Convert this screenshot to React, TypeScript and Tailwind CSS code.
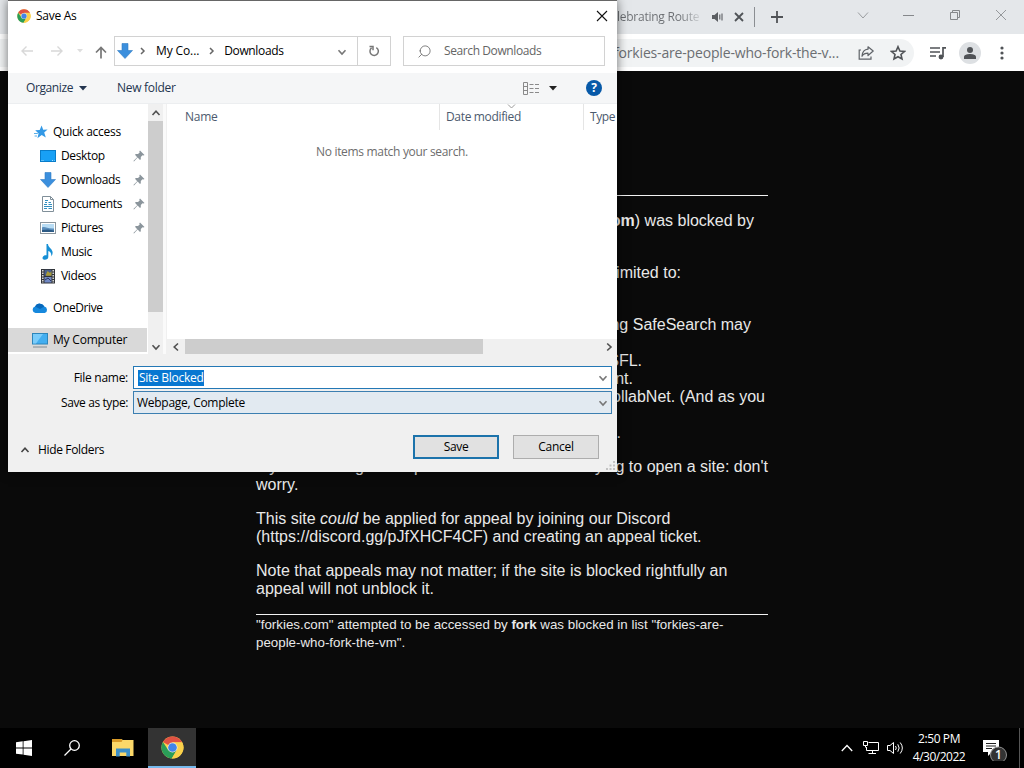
import React from "react";
import { Search } from "lucide-react";

const UI = "font-['Open_Sans','Noto_Sans',sans-serif]";

function ChromeLogo({ className }: { className: string }) {
  return (
    <svg viewBox="0 0 48 48" className={className}>
      <circle cx="24" cy="24" r="23" fill="#fbd14b" />
      <path d="M24 24 L4 12.5 A23 23 0 0 1 44 12.5 L44 13.5 H24 Z" fill="#e05243" />
      <path d="M4 12.5 A23 23 0 0 0 22.5 47 L33 29 L24 24 L15 29 Z" fill="#2a9d58" />
      <path d="M44 13 H24 V24 L33 29 L22.5 47 A23 23 0 0 0 44 13 Z" fill="#fbd14b" />
      <circle cx="24" cy="24" r="10.5" fill="#f2ead8" />
      <circle cx="24" cy="24" r="9" fill="#4285e8" />
    </svg>
  );
}

function Chevron({ dir, className = "" }: { dir: "up" | "down" | "left" | "right"; className?: string }) {
  const d = {
    up: "M1.5 7 L5 3.2 L8.5 7",
    down: "M1.5 3.2 L5 7 L8.5 3.2",
    left: "M7 1.5 L3.2 5 L7 8.5",
    right: "M3.2 1.5 L7 5 L3.2 8.5",
  }[dir];
  return (
    <svg viewBox="0 0 10 10" className={`size-2.5 shrink-0 ${className}`} fill="none" stroke="currentColor" strokeWidth="1.6">
      <path d={d} />
    </svg>
  );
}

function DownArrow() {
  return (
    <svg viewBox="0 0 16 16" className="size-4 shrink-0">
      <path d="M5 0.5 H11 V7.5 H15.5 L8 15.5 L0.5 7.5 H5 Z" fill="#3b8fdd" stroke="#2f7cc4" strokeWidth=".6" />
    </svg>
  );
}

function Pin() {
  return (
    <svg viewBox="0 0 12 12" className="size-3 shrink-0" fill="#8b959c">
      <path d="M7 .5 L11.5 5 L10.5 5.6 L9.5 5.3 L7.8 7 L7.8 9.3 L7 10 L4.6 7.6 L1 11.5 L.4 11 L4.2 7.2 L2 4.8 L2.8 4 L5 4.1 L6.7 2.4 L6.3 1.4 Z" />
    </svg>
  );
}

const icons: Record<string, React.ReactNode> = {
  star: (
    <svg viewBox="0 0 14 14" className="size-3.5 shrink-0">
      <path d="M7.6 .6 L9.2 4.8 L13.6 4.5 L10.2 7.6 L11.8 12.6 L7.7 10.1 L3.4 13.2 L4.6 8.4 L1.2 5.2 L5.7 4.9 Z" fill="#3399e6" />
      <path d="M0 8.5 H3.8 M.6 11 H3" stroke="#58aee9" />
    </svg>
  ),
  desktop: (
    <svg viewBox="0 0 16 12" className="h-3 w-4 shrink-0">
      <rect x=".5" y=".5" width="15" height="11" fill="#18a0f5" stroke="#087cc9" />
      <path d="M1.5 10.5 H4 M12 10.5 H14.5" stroke="#a9dcfb" strokeDasharray="1 1" />
    </svg>
  ),
  downloads: <DownArrow />,
  documents: (
    <svg viewBox="0 0 16 16" className="size-4 shrink-0">
      <path d="M2.5 .5 H10.5 L13.5 3.5 V15.5 H2.5 Z" fill="#fff" stroke="#808f99" />
      <path d="M10.5 .5 V3.5 H13.5" fill="none" stroke="#808f99" />
      <path d="M5 4.5 H8 M5 6.5 H7 M8.5 6.5 H11 M4 8.5 H7 M8.5 8.5 H12 M4 10.5 H12 M4 12.5 H7 M8.5 12.5 H12" stroke="#328fc0" />
    </svg>
  ),
  pictures: (
    <svg viewBox="0 0 16 12" className="h-3 w-4 shrink-0">
      <rect x=".5" y=".5" width="15" height="11" fill="#fff" stroke="#8b969e" />
      <rect x="2" y="2" width="12" height="8" fill="#b8dcf4" />
      <path d="M2 5.5 C5 4 7 7 14 6.5 V10 H2 Z" fill="#5b8fbd" />
      <path d="M2 8 L8 7.5 L14 8.5 V10 H2 Z" fill="#2c5a85" />
    </svg>
  ),
  music: (
    <svg viewBox="0 0 16 16" className="size-4 shrink-0">
      <path d="M6.5 0 H8 C8 3.5 13 5 12.6 9 C12.5 10.5 12 11.5 11.2 12.5 C11.7 9.5 10.5 7.5 8.3 7 V13 C8.3 14.8 6.4 16 4.4 15.8 C2.8 15.6 2.1 14.4 2.8 13 C3.5 11.5 5 11 6.5 11.3 Z" fill="#168fd5" />
    </svg>
  ),
  videos: (
    <svg viewBox="0 0 16 16" className="size-4 shrink-0">
      <rect x="1" y="1" width="14" height="14.5" fill="#303337" />
      <path d="M2.8 2 V15 M13.2 2 V15" stroke="#e9e9e9" strokeWidth="1.4" strokeDasharray="1.4 1.1" />
      <rect x="4.5" y="1.8" width="7" height="6" fill="#49608e" />
      <path d="M6 6.5 L7.5 3 L10 5 L11.5 3 V7.8 H6 Z" fill="#a99b38" />
      <rect x="4.5" y="9" width="7" height="5.5" fill="#7088c4" />
      <path d="M5 12 L8 10 L11 13" stroke="#2c3964" fill="none" />
    </svg>
  ),
  onedrive: (
    <svg viewBox="0 0 16 10" className="h-2.5 w-4 shrink-0">
      <path d="M3.5 10 A3.4 3.4 0 0 1 3 3.4 A5.2 5.2 0 0 1 12.3 3.6 A3.3 3.3 0 0 1 12.7 10 Z" fill="#1688dd" />
      <path d="M3 3.4 A5.2 5.2 0 0 1 12.3 3.6 L8 6 Z" fill="#0868bb" />
    </svg>
  ),
  computer: (
    <svg viewBox="0 0 16 15" className="h-[15px] w-4 shrink-0">
      <rect x=".5" y=".5" width="15" height="10.5" fill="#42aef0" stroke="#2d85ba" />
      <path d="M1 1 H11 L4 10.5 H1 Z" fill="#7accfa" />
      <path d="M1 14 H15" stroke="#7f8c95" />
    </svg>
  ),
};

const quickItems = [
  { icon: "desktop", label: "Desktop", pinned: true },
  { icon: "downloads", label: "Downloads", pinned: true },
  { icon: "documents", label: "Documents", pinned: true },
  { icon: "pictures", label: "Pictures", pinned: true },
  { icon: "music", label: "Music", pinned: false },
  { icon: "videos", label: "Videos", pinned: false },
];

function Sidebar() {
  return (
    <div className="flex w-[159px] shrink-0">
      <div className="flex w-[139px] flex-col pt-4 text-black">
        <div className="flex h-6 items-center gap-[5px] pl-[26px]">
          {icons.star}
          <span className="tracking-[-0.28px]">Quick access</span>
        </div>
        {quickItems.map((item) => (
          <div key={item.label} className="flex h-6 items-center gap-[5px] pr-0.5 pl-8">
            {icons[item.icon]}
            <span className="flex-1 tracking-[-0.36px]">{item.label}</span>
            {item.pinned && <Pin />}
          </div>
        ))}
        <div className="mt-2 flex h-6 items-center gap-[5px] pl-6">
          {icons.onedrive}
          <span className="tracking-[-0.4px]">OneDrive</span>
        </div>
        <div className="mt-2 flex h-6 items-center gap-[5px] bg-[#d9d9d9] pl-6">
          {icons.computer}
          <span className="tracking-[-0.2px]">My Computer</span>
        </div>
      </div>
      <div className="ml-px flex w-[15px] flex-col items-center bg-[#f0f0f0] text-[#505050]">
        <div className="flex h-[17px] items-center">
          <Chevron dir="up" />
        </div>
        <div className="h-[191px] w-full bg-[#cdcdcd]" />
        <div className="mt-auto flex h-[15px] items-center">
          <Chevron dir="down" />
        </div>
      </div>
      <div className="w-1 border-r border-[#f0f0f0] bg-[#fafafa]" />
    </div>
  );
}

function FileList() {
  return (
    <div className="flex min-w-0 flex-1 flex-col">
      <div className="flex h-[26px] text-[#4c5a6e]">
        <div className="flex w-[272px] items-center pl-[18px]">
          <span className="tracking-[-0.28px]">Name</span>
        </div>
        <div className="relative flex w-36 items-center border-l border-[#e5e5e5] pl-1.5">
          <span className="tracking-[-0.34px]">Date modified</span>
          <svg viewBox="0 0 9 5" className="absolute top-0 left-[67px] h-[5px] w-[9px]" fill="none" stroke="#9a9a9a">
            <path d="M1 .5 L4.5 4 L8 .5" />
          </svg>
        </div>
        <div className="flex items-center border-l border-[#e5e5e5] pl-1.5">
          <span className="tracking-[-0.4px]">Type</span>
        </div>
      </div>
      <div className="flex flex-1 justify-center pt-3.5 text-[#6d6d6d]">
        <span className="tracking-[-0.32px]">No items match your search.</span>
      </div>
      <div className="flex h-[15px] items-center bg-[#f0f0f0] pl-1 text-[#505050]">
        <Chevron dir="left" />
        <div className="ml-1 h-full w-[298px] bg-[#cdcdcd]" />
        <Chevron dir="right" className="mr-[3px] ml-auto" />
      </div>
    </div>
  );
}

function SaveDialog() {
  return (
    <div className={`absolute top-0 left-2 flex h-[472px] w-[609px] flex-col overflow-hidden border-t border-[#666] bg-white text-[12px] leading-4 text-black shadow-[0_0_10px_rgba(0,0,0,0.55)] ${UI}`}>
      {/* Title bar */}
      <div className="flex h-[29px] items-center pr-[9px] pl-[9px]">
        <ChromeLogo className="size-3.5" />
        <span className="ml-[5px] tracking-[-0.28px]">Save As</span>
        <svg viewBox="0 0 12 12" className="ml-auto size-3" stroke="#111" strokeWidth="1.1">
          <path d="M1 1 L11 11 M11 1 L1 11" />
        </svg>
      </div>

      {/* Address row */}
      <div className="mt-1.5 flex h-[30px] items-center pl-3">
        <svg viewBox="0 0 14 12" className="h-3 w-3.5" fill="none" stroke="#d8d8d8" strokeWidth="1.4">
          <path d="M13 6 H2 M6.5 1.5 L2 6 L6.5 10.5" />
        </svg>
        <svg viewBox="0 0 14 12" className="ml-4 h-3 w-3.5" fill="none" stroke="#d8d8d8" strokeWidth="1.4">
          <path d="M1 6 H12 M7.5 1.5 L12 6 L7.5 10.5" />
        </svg>
        <svg viewBox="0 0 6 4" className="ml-[13px] h-1 w-1.5" fill="#dedede">
          <path d="M0 0 H6 L3 3.5 Z" />
        </svg>
        <svg viewBox="0 0 12 13" className="mt-0.5 ml-3 h-[13px] w-3" fill="none" stroke="#777" strokeWidth="1.7">
          <path d="M6 12.5 V2 M1 6.5 L6 1.5 L11 6.5" />
        </svg>
        <div className="ml-[7px] flex h-[30px] w-[277px] items-center border border-[#d2d2d2]">
          <div className="ml-0.5 flex w-4">
            <DownArrow />
          </div>
          <svg viewBox="0 0 6 8" className="ml-[7px] h-2 w-1.5" fill="none" stroke="#666" strokeWidth="1.5">
            <path d="M1 1 L4 4 L1 7" />
          </svg>
          <span className="ml-2.5 tracking-[-0.12px]">My Co...</span>
          <svg viewBox="0 0 6 8" className="ml-2.5 h-2 w-1.5" fill="none" stroke="#666" strokeWidth="1.5">
            <path d="M1 1 L4 4 L1 7" />
          </svg>
          <span className="ml-[9px] tracking-[-0.36px]">Downloads</span>
          <Chevron dir="down" className="mt-0.5 mr-[10px] ml-auto text-[#777]" />
          <div className="flex h-full w-[33px] items-center justify-center border-l border-[#d2d2d2]">
            <svg viewBox="0 0 12 12" className="size-3" fill="none" stroke="#777" strokeWidth="1.5">
              <path d="M8.3 2.6 A4.2 4.2 0 1 1 3.6 2.9 M1.5 1.5 H5 V5.2" />
            </svg>
          </div>
        </div>
        <div className="ml-3 flex h-[30px] w-[202px] items-center border border-[#d2d2d2] text-[#656565]">
          <Search className="ml-[13px] size-[15px] -scale-x-100" strokeWidth={1.3} />
          <span className="ml-3 tracking-[-0.4px]">Search Downloads</span>
        </div>
      </div>

      {/* Command bar */}
      <div className="mt-[7px] flex h-[31px] items-center border-b border-[#eceef0] bg-[#f5f6f7] pr-[15px] pl-[18px] text-[#24354f]">
        <span className="tracking-[-0.4px]">Organize</span>
        <svg viewBox="0 0 8 5" className="ml-1.5 h-[5px] w-2" fill="#24354f">
          <path d="M0 0 H8 L4 4.5 Z" />
        </svg>
        <span className="ml-[30px] tracking-[-0.28px]">New folder</span>
        <svg viewBox="0 0 17 13" className="ml-auto h-[13px] w-[17px]" fill="none" stroke="#8a8a8a">
          <path d="M.5 .5 H4.5 V12.5 H.5 Z M.5 4.5 H4.5 M.5 8.5 H4.5" />
          <path d="M6.5 2.5 H16.5 M6.5 6.5 H16.5 M6.5 10.5 H16.5" strokeDasharray="4 1.5" />
        </svg>
        <svg viewBox="0 0 8 5" className="ml-[9px] h-[5px] w-2" fill="#222">
          <path d="M0 0 H8 L4 4.5 Z" />
        </svg>
        <div className="ml-[29px] flex size-4 items-center justify-center rounded-full bg-[#0759a8] text-[12px] leading-4 font-bold text-white">?</div>
      </div>

      {/* Folder tree and files */}
      <div className="flex h-[250px]">
        <Sidebar />
        <FileList />
      </div>

      {/* Name, type and buttons */}
      <div className="relative flex flex-1 flex-col bg-[#f0f0f0] pt-3">
        <div className="flex items-center pr-[5px]">
          <span className="w-[120px] text-right tracking-[-0.28px]">File name:</span>
          <div className="ml-[5px] flex h-[23px] flex-1 items-center border border-[#2478b5] bg-white pr-[3px] pl-1">
            <span className="bg-[#0877d1] pl-px tracking-[-0.28px] text-white">Site Blocked</span>
            <Chevron dir="down" className="ml-auto text-[#777]" />
          </div>
        </div>
        <div className="mt-0.5 flex items-center pr-[5px]">
          <span className="w-[120px] text-right tracking-[-0.4px]">Save as type:</span>
          <div className="ml-[5px] flex h-[23px] flex-1 items-center border border-[#3c7fb1] bg-[#e2eaf1] pr-[3px] pl-[3px]">
            <span className="tracking-[-0.28px]">Webpage, Complete</span>
            <Chevron dir="down" className="ml-auto text-[#777]" />
          </div>
        </div>
        <div className="mt-[21px] flex pl-3">
          <div className="flex h-[30px] items-center gap-2">
            <Chevron dir="up" className="text-[#444]" />
            <span className="tracking-[-0.34px]">Hide Folders</span>
          </div>
          <button className="mr-3.5 ml-auto h-6 w-[86px] border-2 border-[#1c73ab] bg-[#e1e1e1] tracking-[-0.34px]">Save</button>
          <button className="mr-[18px] h-6 w-[86px] border border-[#adadad] bg-[#e1e1e1] tracking-[-0.28px]">Cancel</button>
        </div>
        <svg viewBox="0 0 9 9" className="absolute right-0.5 bottom-0.5 size-[9px]" fill="#c2c2c2">
          <path d="M7 0h2v2h-2z M3.5 3.5h2v2h-2z M7 3.5h2v2h-2z M0 7h2v2h-2z M3.5 7h2v2h-2z M7 7h2v2h-2z" />
        </svg>
      </div>
    </div>
  );
}

function BrowserChrome() {
  return (
    <div className={`flex flex-col ${UI}`}>
      <div className="flex h-[34px] items-center bg-[#e4e7ea] pr-[17px] pl-[617px] text-[12px] text-[#6a6d71]">
        <span className="w-[83px] overflow-hidden bg-gradient-to-r from-[#6a6d71] from-75% to-[#d0d3d6] bg-clip-text tracking-[-0.25px] whitespace-nowrap text-transparent">lebrating Route</span>
        <svg viewBox="0 0 12 10" className="ml-3 h-2.5 w-3" fill="#5b5e62">
          <path d="M0 3 H2.5 L6 0 V10 L2.5 7 H0 Z" />
          <path d="M7.8 2.5 V7.5 M10 1.5 V8.5" stroke="#5b5e62" strokeWidth="1.1" />
        </svg>
        <svg viewBox="0 0 10 10" className="ml-[10px] size-2.5" stroke="#505357" strokeWidth="1.8">
          <path d="M1 1 L9 9 M9 1 L1 9" />
        </svg>
        <div className="ml-[10px] h-5 w-px bg-[#8b8e92]" />
        <svg viewBox="0 0 12 12" className="ml-4 size-3" stroke="#505357" strokeWidth="1.8">
          <path d="M6 0 V12 M0 6 H12" />
        </svg>
        <svg viewBox="0 0 12 12" className="mb-1 ml-auto size-3" fill="none" stroke="#9a9da0">
          <path d="M1 3.5 L6 9 L11 3.5" />
        </svg>
        <svg viewBox="0 0 12 12" className="mb-1 ml-[34px] size-3" stroke="#85888b">
          <path d="M0 6.5 H11" />
        </svg>
        <svg viewBox="0 0 12 12" className="mb-1 ml-[34px] size-3" fill="none" stroke="#85888b">
          <path d="M1.5 3.5 H8.5 V10.5 H1.5 Z M3.5 3.5 V1.5 H10.5 V8.5 H8.5" />
        </svg>
        <svg viewBox="0 0 12 12" className="mb-1 ml-[34px] size-3" stroke="#95989b">
          <path d="M1 1 L11 11 M11 1 L1 11" />
        </svg>
      </div>
      <div className="flex h-[37px] items-center bg-white pr-4">
        <div className="flex h-7 w-[914px] items-center rounded-r-full bg-[#f1f3f4] pr-2 pl-[614px]">
          <span className="text-[14px] tracking-[-0.17px] whitespace-nowrap text-[#6b6e72]">forkies-are-people-who-fork-the-v...</span>
          <svg viewBox="0 0 16 16" className="ml-auto size-4" fill="none" stroke="#5f6368" strokeWidth="1.2">
            <path d="M3 5 H1.2 V14.2 H13 V11.5" />
            <path d="M10 1.8 L15.2 6 L10 10.5 V8.2 C7 8.2 5.3 9 4 11.3 C4.3 7 6.3 4.5 10 4.2 Z" strokeLinejoin="round" />
          </svg>
          <svg viewBox="0 0 16 16" className="ml-4 size-4" fill="none" stroke="#505357" strokeWidth="1.6">
            <path d="M8 1.7 L9.9 6 L14.5 6.4 L11 9.5 L12 14 L8 11.7 L4 14 L5 9.5 L1.5 6.4 L6.1 6 Z" />
          </svg>
        </div>
        <svg viewBox="0 0 16 14" className="ml-4 h-3.5 w-4" fill="none" stroke="#505357" strokeWidth="1.7">
          <path d="M0 2 H10 M0 6 H10 M0 10 H6 M13 11 V1.8 H16" />
          <circle cx="11" cy="11" r="1.6" fill="#505357" />
        </svg>
        <div className="ml-[13px] flex size-[22px] items-center justify-center rounded-full bg-[#dde0e3]">
          <svg viewBox="0 0 12 12" className="size-3" fill="#505357">
            <circle cx="6" cy="3" r="3" />
            <path d="M0 12 V10 C0 7.8 3.5 7 6 7 C8.5 7 12 7.8 12 10 V12 Z" />
          </svg>
        </div>
        <svg viewBox="0 0 4 14" className="mr-1 ml-auto h-3.5 w-1" fill="#505357">
          <circle cx="2" cy="2" r="1.6" />
          <circle cx="2" cy="7" r="1.6" />
          <circle cx="2" cy="12" r="1.6" />
        </svg>
      </div>
    </div>
  );
}

function BlockedPage() {
  return (
    <div className="mx-auto flex w-full flex-1 flex-col bg-[#0a0a0a] px-64 pt-[124px] font-['Liberation_Sans',Arial,sans-serif] text-[16px] leading-[18px] whitespace-nowrap text-[#e8e8e8]">
      <div className="h-px bg-[#f2f2f2]" />
      <p className="mt-4 h-9 pr-3.5 text-right">
        <b>om</b>) was blocked by
      </p>
      <p className="mt-4 pr-[87px] text-right">imited to:</p>
      <p className="mt-[34px] h-9 pr-[17px] text-right">ng SafeSearch may</p>
      <p className="pr-[126px] text-right">SFL.</p>
      <p className="pr-[135px] text-right">nt.</p>
      <p className="h-9 pr-[3px] text-right">ollabNet. (And as you</p>
      <p className="pr-[147px] text-right">.</p>
      <div className="mt-4 flex justify-between">
        <span>If you&apos;re seeing</span>
        <span className="ml-[50px]">p</span>
        <span className="ml-auto">trying to open a site: don&apos;t</span>
      </div>
      <p>worry.</p>
      <p className="mt-4">
        This site <i>could</i> be applied for appeal by joining our Discord
        <br />
        (https://discord.gg/pJfXHCF4CF) and creating an appeal ticket.
      </p>
      <p className="mt-4">
        Note that appeals may not matter; if the site is blocked rightfully an
        <br />
        appeal will not unblock it.
      </p>
      <div className="mt-4 h-px bg-[#f2f2f2]" />
      <p className="mt-px text-[13.333px]">
        &quot;forkies.com&quot; attempted to be accessed by <b>fork</b> was blocked in list &quot;forkies-are-
        <br />
        people-who-fork-the-vm&quot;.
      </p>
    </div>
  );
}

function Taskbar() {
  return (
    <div className={`flex h-10 items-center bg-black text-white ${UI}`}>
      <div className="flex w-12 justify-center">
        <svg viewBox="0 0 16 16" className="size-4" fill="#fff">
          <path d="M0 2.2 L6.7 1.3 V7.5 H0 Z M7.5 1.2 L16 0 V7.5 H7.5 Z M0 8.4 H6.7 V14.6 L0 13.7 Z M7.5 8.4 H16 V16 L7.5 14.8 Z" />
        </svg>
      </div>
      <div className="flex w-12 justify-center">
        <svg viewBox="0 0 16 16" className="size-4" fill="none" stroke="#fff" strokeWidth="1.3">
          <circle cx="10.5" cy="5.5" r="4.8" />
          <path d="M7 9 L.5 15.5" />
        </svg>
      </div>
      <div className="flex w-[52px] justify-center pl-0.5">
        <svg viewBox="0 0 22 18" className="h-[18px] w-[22px]">
          <path d="M0 0 H9 L11 1 H21.5 V17 H0 Z" fill="#fbd869" />
          <path d="M0 0 H9 L10.5 1.5 L9.5 3 H0 Z" fill="#d99b28" />
          <path d="M4 17.5 V9.5 H18 V17.5 H14.3 V13.5 H7.7 V17.5 Z" fill="#3c8fc8" />
        </svg>
      </div>
      <div className="flex h-10 w-12 items-center justify-center border-b-2 border-[#76b9ed] bg-[#333]">
        <ChromeLogo className="mt-px size-[23px]" />
      </div>
      <svg viewBox="0 0 12 8" className="mr-2.5 ml-auto h-2 w-3" fill="none" stroke="#fff" strokeWidth="1.3">
        <path d="M.8 7 L6 1.5 L11.2 7" />
      </svg>
      <svg viewBox="0 0 17 14" className="h-3.5 w-[17px]" fill="none" stroke="#fff">
        <path d="M5.5 1.5 H15.5 V9.5 H3.5 V6 M9.5 9.5 V12.5 M5.5 12.5 H13" />
        <path d="M.5 .5 H4.5 V4.5 H.5 Z M2.5 4.5 V6.5" />
      </svg>
      <svg viewBox="0 0 17 14" className="ml-[7px] h-3.5 w-[17px]" fill="none" stroke="#fff">
        <path d="M.5 4.5 H3 L6.5 1.5 V12.5 L3 9.5 H.5 Z M8.5 5 Q10 7 8.5 9 M10.8 3.3 Q13.5 7 10.8 10.7 M13.2 1.5 Q17.5 7 13.2 12.5" />
      </svg>
      <div className="ml-2 flex w-[54px] flex-col items-center text-[12px] leading-[18px] whitespace-nowrap">
        <span className="tracking-[-0.4px]">2:50 PM</span>
        <span className="tracking-[-0.5px]">4/30/2022</span>
      </div>
      <div className="relative mr-[12px] ml-[17px] h-[26px] w-6">
        <svg viewBox="0 0 24 26" className="h-[26px] w-6">
          <path d="M0 5 H16 V17 H9 L5 21 V17 H0 Z" fill="#fff" />
          <path d="M3 8.5 H13 M3 11 H13 M3 13.5 H9" stroke="#222" />
          <circle cx="15.5" cy="20" r="8" fill="#333" stroke="#909090" />
        </svg>
        <span className="absolute top-3 left-[12px] text-[12px] leading-4 font-semibold">1</span>
      </div>
      <div className="mr-1 h-10 w-px bg-[#555]" />
    </div>
  );
}

export default function App() {
  return (
    <div className="relative flex h-[768px] w-[1024px] flex-col overflow-hidden bg-black">
      <BrowserChrome />
      <BlockedPage />
      <Taskbar />
      <SaveDialog />
    </div>
  );
}
